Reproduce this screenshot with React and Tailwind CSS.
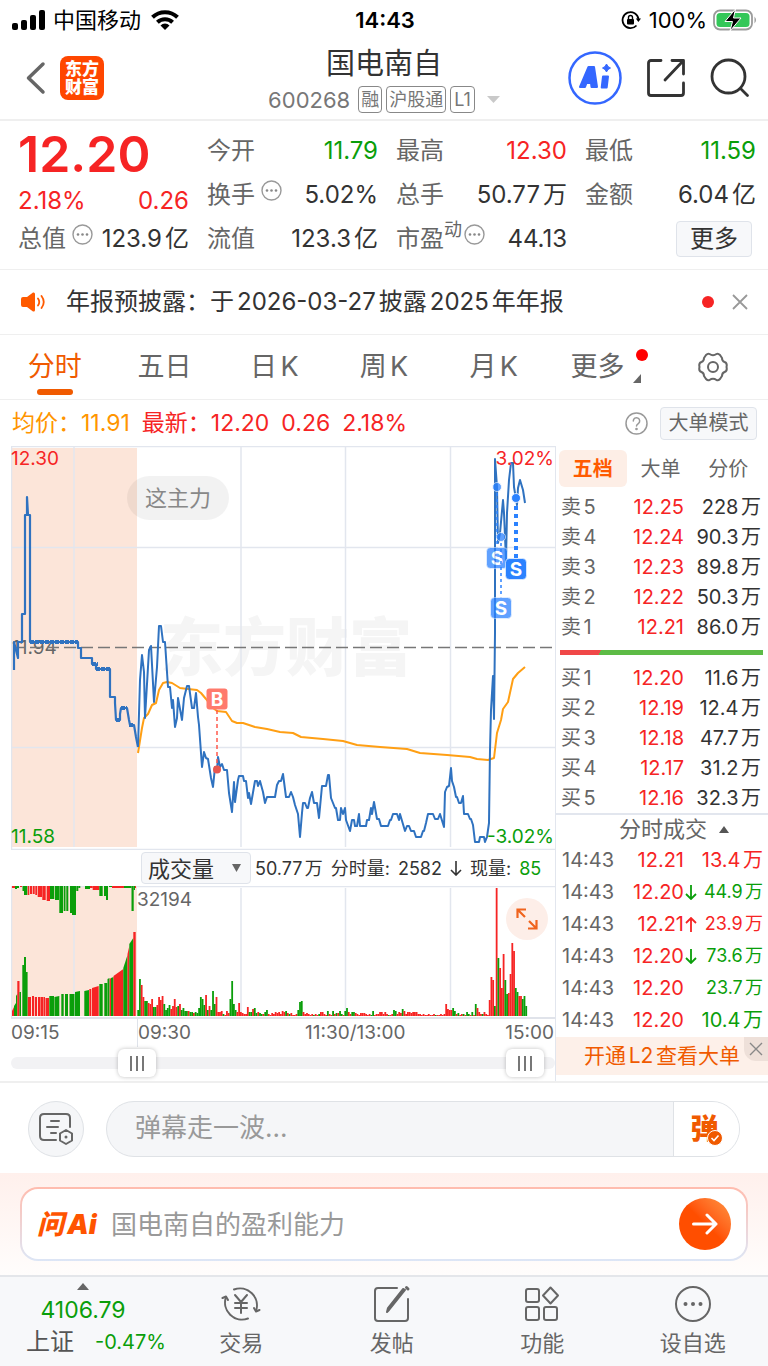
import React, { useState } from 'react';

const RED = '#f62424';
const GREEN = '#0a9e0a';

const pricePre =
  '14,670 14,642 18,658 18,642 22,642 22,614 25,614 25,515 27,515 27,497 28,515 30,515 30,642 78,642 78,648 81,648 81,658 92,658 92,664 96,664 96,669 110,669 110,697 115,697 115,703 116,720 120,720 120,714 121,708 127,708 128,714 129,720 130,725 134,725 136,737 138,747';

const priceLine =
  '138,747 140,680 142,655 144,672 145,718 149,650 151,646 154,702 157,667 159,626 161,626 163,642 165,642 168,687 170,687 172,708 173,700 175,727 177,718 178,698 182,720 184,698 187,686 189,686 192,708 194,708 196,693 198,717 199,725 202,767 204,752 206,758 208,759 211,778 213,787 215,767 217,770 218,757 220,767 222,764 224,770 227,770 229,793 232,812 234,782 235,802 238,780 239,776 243,776 244,781 246,781 248,798 249,793 251,804 255,781 257,781 258,786 260,781 263,792 265,803 267,797 275,797 277,785 279,781 281,781 283,774 286,797 289,797 291,792 293,797 295,805 298,814 300,837 302,813 303,803 305,803 307,808 308,808 310,798 312,792 314,803 317,803 319,818 322,786 326,786 328,775 329,775 331,798 335,808 336,808 338,820 340,820 341,808 343,814 345,808 346,820 350,831 352,820 354,820 355,826 357,826 359,814 360,826 366,826 367,820 369,820 371,808 372,814 374,802 377,819 379,819 381,826 388,826 390,820 391,820 393,814 397,814 399,820 400,814 405,831 407,826 409,826 411,831 414,831 416,837 421,837 423,831 424,831 426,823 428,814 433,814 435,819 438,819 440,814 444,827 445,792 447,787 449,786 451,768 452,781 454,787 456,797 457,797 459,803 461,803 463,796 464,814 468,814 470,819 471,819 473,825 475,842 479,842 480,837 484,837 485,842 487,837 489,823 490,750 491,710 493,676 494,719 495,633 495,459 497,487 498,543 500,533 503,500 504,513 506,560 507,513 509,480 511,463 513,463 514,487 517,505 518,488 520,480 523,490 525,503';

const averageLine =
  '138,753 142,728 144,718 148,714 152,705 156,703 159,690 163,683 167,682 172,683 180,688 188,689 197,690 201,693 206,699 213,708 217,711 226,712 232,721 237,723 243,723 255,727 267,729 280,732 293,733 301,737 323,739 343,741 357,745 380,747 407,749 420,753 447,755 470,757 477,759 488,760 494,758 497,733 501,720 503,709 508,702 513,679 518,673 525,667';

// call auction, unmatched volume: [from, to, length, colour]
const auctionTop = [
  [12, 15, 2, RED], [15, 17, 3, GREEN], [17, 19, 2, GREEN], [20, 22, 1, RED], [22.5, 24, 5, GREEN], [24, 27.3, 9, GREEN],
  [27.7, 29.3, 9, RED], [30, 32, 8, RED], [32.7, 34.7, 8, RED], [35.3, 37, 9, RED], [37.7, 42, 11, RED],
  [42.3, 45.7, 14, RED], [46.7, 50, 15, RED], [50, 54.3, 13, GREEN], [55, 59, 14, GREEN], [59.3, 63, 27, GREEN],
  [63.7, 65.5, 25, GREEN], [66.3, 68.3, 25, GREEN], [70, 72, 27, GREEN], [72, 76, 29, GREEN], [76.3, 78.3, 5, GREEN],
  [78.3, 80.3, 2, GREEN], [85, 90, 3, GREEN], [90, 92.7, 2, RED], [92.7, 99.3, 4, RED], [99.3, 102.7, 10, GREEN],
  [104, 106, 10, GREEN], [106, 108, 14, GREEN], [109, 112, 1, GREEN], [112, 124, 2, RED], [124, 131.5, 2, GREEN],
  [131.5, 133.7, 25, GREEN], [133.7, 135, 4, GREEN], [135, 136, 2, RED],
];

// call auction, matched volume: [from, to, start height, end height, colour]
const auctionBottom = [
  [12, 14, 5, 9, RED], [14, 16, 10, 13, GREEN], [16, 17.3, 20, 22, GREEN], [17.3, 19.5, 35, 35, RED],
  [19.5, 21, 24, 24, GREEN], [22.3, 24, 51, 51, GREEN], [24, 26, 59, 59, GREEN], [26, 27.6, 44, 44, GREEN],
  [27.8, 31, 19, 19, RED], [32, 34, 20, 20, RED], [34.8, 37, 19, 19, RED], [38, 40, 19, 19, RED],
  [40.4, 43, 19, 19, RED], [43.4, 45, 19, 19, RED], [45.5, 49, 18, 18, RED], [49.3, 54, 20, 20, GREEN],
  [54.4, 59.3, 19, 20, GREEN], [61.3, 63.7, 22, 22, GREEN], [65, 68, 22, 22, GREEN], [69.5, 74.5, 22, 22, GREEN],
  [75, 80, 24, 25, GREEN], [84.3, 89, 25, 26, GREEN], [89.3, 91.3, 27, 27, RED], [92, 98.7, 28, 30, RED],
  [99.3, 102.7, 32, 32, GREEN], [104.3, 107.3, 33, 33, GREEN], [107.5, 109.5, 37, 38, GREEN], [109.7, 111, 37, 38, RED],
  [111, 113.5, 38, 39, GREEN], [113.5, 123.3, 40, 47, RED], [123.3, 127.5, 48, 61, GREEN], [127.5, 129.3, 62, 70, RED],
  [129.3, 133.3, 72, 78, GREEN], [133.3, 135.7, 84, 84, RED],
];

// [first minute, one bar a minute], below zero for a falling minute
const minuteVolumes = [
  [0, [-6, -37, 31, 19, -15, -15, 13, 12, 17, -9, -9, 11, 19, 16, 20, -12, -6, -8, -11, 7, 10, 17, 9, -10, 12, -6, -8, -5, -5, 5]],
  [30, [-4, -4, 3, -4, -3, -8, -19, -17, -11, 21, -6, 10, -6, -25, -12, 19, 4, 4, 5, -2, 1, 5, 3]],
  [53, [-17, -35, -12, -6, 4, 13, 4, 3, 2, 2, 9, -4, -4, 7, -8, -3, 4, -3, -2, 2, -4, -6, 2, 1, 3, 2, 4, 3, 4, 2]],
  [83, [5, 4, -5, 3, -2, 3, 1, 1, 2, -6, -14, -15, 4, 2, 3, 2, 1, 2, -1, 2, 1, -2, 4, 4, 2, 1, -5, 2, 1, -5]],
  [113, [2, -3, 3, -5, -2, 1, -5, -8, 4, 2, -4, -4, 3, 2, 1, 3, 3, 3, 2, 1, 2, -1, -5, 1, 2, 2, 4, 4, 2, 4]],
  [143, [2, -1, 1, 2, -6, -5, 2, 4, 3, -7, 5, 2, 4, 4, 3, 4, 4, 4, 2, 2, 1, 2, 1, 1, 2, 1, 1, 2, -1, 1, 1, 2, 1, 2]],
  [177, [12, 7, 6, 6, -8, -5, 2, -3, 1, 2, -2, 1, -4, -2, 1, -4, 1, -12, 8, 4, 2, -2, 4, 2, 1]],
  [202, [16, 39, 36, -10, 128, -58, 48, 28, 62, -36, -22, 23, 42, 73, 65, -28, -24, 20, 20, -17, -20, -10]],
];

const marks = [
  { x: 497, y: 487, labelY: 558, dash: '3 3', width: 2, opacity: 0.75 },
  { x: 516, y: 498, labelY: 569, dash: '4 4', width: 4, opacity: 1 },
  { x: 501, y: 537, labelY: 608, dash: '3 3', width: 2, opacity: 0.75 },
];

const sells = [
  ['5', '12.25', '228'],
  ['4', '12.24', '90.3'],
  ['3', '12.23', '89.8'],
  ['2', '12.22', '50.3'],
  ['1', '12.21', '86.0'],
];

const buys = [
  ['1', '12.20', '11.6'],
  ['2', '12.19', '12.4'],
  ['3', '12.18', '47.7'],
  ['4', '12.17', '31.2'],
  ['5', '12.16', '32.3'],
];

const trades = [
  ['14:43', '12.21', '', '13.4', 'text-[20px] text-[#f62424]'],
  ['14:43', '12.20', 'down', '44.9', 'text-[18px] text-[#0a9e0a]'],
  ['14:43', '12.21', 'up', '23.9', 'text-[18px] text-[#f62424]'],
  ['14:43', '12.20', 'down', '73.6', 'text-[18px] text-[#0a9e0a]'],
  ['14:43', '12.20', '', '23.7', 'text-[18px] text-[#0a9e0a]'],
  ['14:43', '12.20', '', '10.4', 'text-[20px] text-[#0a9e0a]'],
];

function StatusBar() {
  return (
    <div className="grid h-10 grid-cols-[1fr_auto_1fr] items-center pl-3 pr-2.5 text-[22px] leading-none text-black">
      <div className="flex items-center">
        <svg width="33" height="20" viewBox="0 0 33 20" aria-hidden="true">
          <rect x="0" y="13" width="6" height="7" rx="2" />
          <rect x="9" y="10" width="6" height="10" rx="2" />
          <rect x="18" y="5" width="6" height="15" rx="2" />
          <rect x="27" y="0" width="6" height="20" rx="2" />
        </svg>
        <span className="ml-2">中国移动</span>
        <svg className="ml-2.5" width="28" height="20" viewBox="0 0 28 20" aria-hidden="true">
          <g fill="none" stroke="#000" strokeWidth="4">
            <path d="M1.500 7.200A18 18 0 0 1 26.500 7.200" />
            <path d="M6.400 12.200A11 11 0 0 1 21.600 12.200" />
          </g>
          <path d="M14 20l-4.500-4.600a6.500 6.500 0 0 1 9 0z" />
        </svg>
      </div>
      <span className="font-semibold">14:43</span>
      <div className="flex items-center justify-end">
        <svg width="20" height="20" viewBox="0 0 20 20" fill="none" stroke="#000" strokeWidth="1.8" aria-hidden="true">
          <path d="M15.500 15.500A8 8 0 1 1 17.500 9" />
          <path d="M14.800 8.500h5.200l-2.600 3.600z" fill="#000" stroke="none" />
          <rect x="6" y="9" width="7" height="5.500" rx="1" fill="#000" stroke="none" />
          <path d="M7.500 9.500V7.500a2 2 0 0 1 4 0v2" strokeWidth="1.400" />
        </svg>
        <span className="ml-2">100%</span>
        <svg className="ml-1.5" width="45" height="22" viewBox="0 0 45 22" aria-hidden="true">
          <rect x="1" y="1.500" width="38" height="19" rx="6" fill="none" stroke="#9b9b9b" strokeWidth="1.800" />
          <rect x="3.500" y="4" width="33" height="14" rx="3.500" fill="#34c759" />
          <path d="M41.500 7.500q3 3.500 0 7z" fill="#9b9b9b" />
          <path d="M22.500 0L12 12.500h7.500L17 22l11-13h-7.500z" fill="#000" stroke="#fff" strokeWidth="1" />
        </svg>
      </div>
    </div>
  );
}

function Header() {
  return (
    <header className="grid h-[81px] grid-cols-[1fr_auto_1fr] items-center border-b-2 border-[#efefef] px-[18px] pb-1">
      <div className="flex items-center gap-3 pl-1.5">
        <button aria-label="返回" className="w-6">
          <svg width="24" height="34" viewBox="0 0 24 34" fill="none" stroke="#666" strokeWidth="3.500" strokeLinecap="round" strokeLinejoin="round">
            <path d="M19 3L4.500 17L19 31" />
          </svg>
        </button>
        <a href="#home" className="flex size-11 flex-col items-center justify-center rounded-lg bg-[#ff4600] text-[17px] font-black leading-[18px] text-white">
          <span>东方</span>
          <span>财富</span>
        </a>
      </div>

      <div className="flex flex-col items-center gap-1 pt-1">
        <h1 className="text-[29px] leading-9 text-[#333]">国电南自</h1>
        <div className="flex items-center gap-1 text-[#777]">
          <span className="mr-1 text-[22px] leading-7">600268</span>
          <span className="rounded border border-[#888] px-0.5 text-[18px] leading-[25px]">融</span>
          <span className="rounded border border-[#888] px-0.5 text-[18px] leading-[25px]">沪股通</span>
          <span className="rounded border border-[#888] px-[3px] text-[18px] leading-[25px]">L1</span>
          <svg className="ml-2" width="13" height="7" viewBox="0 0 13 7" fill="#c9c9c9" aria-hidden="true">
            <path d="M0 0h13L6.500 7z" />
          </svg>
        </div>
      </div>

      <div className="flex items-center justify-end">
        <button aria-label="AI">
          <svg width="54" height="54" viewBox="0 0 54 54">
            <circle cx="27" cy="27" r="25.500" fill="#fff" stroke="#3467ff" strokeWidth="2.500" />
            <g fill="#3467ff" stroke="#3467ff" strokeLinejoin="round">
              <path d="M12 36L20.500 16H26L29 36H23.500L23 32H18.500L17 36zM20 27.500h2.500l-.4-4.500z" strokeWidth="2" fillRule="evenodd" />
              <path d="M35 25.500h5l-1.300 11h-5z" strokeWidth="2" />
              <path d="M38.500 13q1 3 4 4q-3 1-4 4q-1-3-4-4q3-1 4-4z" strokeWidth="1" />
            </g>
          </svg>
        </button>
        <button aria-label="分享" className="ml-6">
          <svg width="40" height="40" viewBox="0 0 40 40" fill="none" stroke="#333" strokeWidth="2.800" strokeLinecap="round" strokeLinejoin="round">
            <path d="M15 2.500H5Q2.500 2.500 2.500 5V35Q2.500 37.500 5 37.500H35Q37.500 37.500 37.500 35V25" />
            <path d="M26 2.500H37.500V16M37 3L19 22" />
          </svg>
        </button>
        <button aria-label="搜索" className="ml-6">
          <svg width="40" height="40" viewBox="0 0 40 40" fill="none" stroke="#333" strokeWidth="2.800" strokeLinecap="round">
            <circle cx="18.500" cy="18.500" r="16.500" />
            <path d="M31 31L37.500 37.500" />
          </svg>
        </button>
      </div>
    </header>
  );
}

function MoreInfo() {
  return (
    <svg className="mb-2.5 ml-1.5" width="21" height="21" viewBox="0 0 21 21" aria-hidden="true">
      <circle cx="10.500" cy="10.500" r="9.500" fill="none" stroke="#999" strokeWidth="1.400" />
      <g fill="#888">
        <circle cx="6" cy="10.500" r="1.300" />
        <circle cx="10.500" cy="10.500" r="1.300" />
        <circle cx="15" cy="10.500" r="1.300" />
      </g>
    </svg>
  );
}

function Stat({ label, info, sup, children, color = 'text-[#333]' }) {
  return (
    <div className="flex h-11 items-center">
      <dt className="flex items-center text-[#666]">
        {label}
        {sup && <sup className="text-[18px]">{sup}</sup>}
        {info && (sup ? <span className="-ml-1"><MoreInfo /></span> : <MoreInfo />)}
      </dt>
      <dd className={`ml-auto ${color}`}>{children}</dd>
    </div>
  );
}

function Quote() {
  return (
    <dl className="grid grid-cols-4 gap-x-[18px] border-b border-[#efefef] pb-2 pl-[18px] pr-3 pt-2 text-[24px] leading-8">
      <div>
        <div className="h-[50px] text-[50px] font-semibold leading-[50px] text-[#f62424]">12.20</div>
        <div className="flex h-11 items-center justify-between text-[#f62424]">
          <span>2.18%</span>
          <span>0.26</span>
        </div>
        <div className="-mt-1.5">
          <Stat label="总值" info>123.9亿</Stat>
        </div>
      </div>
      <div>
        <Stat label="今开" color="text-[#0a9e0a]">11.79</Stat>
        <Stat label="换手" info>5.02%</Stat>
        <Stat label="流值">123.3亿</Stat>
      </div>
      <div>
        <Stat label="最高" color="text-[#f62424]">12.30</Stat>
        <Stat label="总手">50.77万</Stat>
        <Stat label="市盈" sup="动" info>44.13</Stat>
      </div>
      <div>
        <Stat label="最低" color="text-[#0a9e0a]">11.59</Stat>
        <Stat label="金额">6.04亿</Stat>
        <div className="flex h-11 items-center justify-end pr-1">
          <button className="h-9 w-[76px] rounded border border-[#dfe3ea] bg-[#f7f8fa] text-[#333]">更多</button>
        </div>
      </div>
    </dl>
  );
}

function Notice() {
  return (
    <div className="flex h-[65px] items-center border-b border-[#efefef] pl-[21px] pr-5">
      <svg width="25" height="20" viewBox="0 0 25 20" aria-hidden="true">
        <path d="M0 7Q0 5 2 5H6L12 .500Q14 0 14 2V18Q14 20 12 19.500L6 15H2Q0 15 0 13z" fill="#ff5a00" />
        <path d="M17 6.500Q19.500 10 17 13.500M20.500 4Q25 10 20.500 16" fill="none" stroke="#ff5a00" strokeWidth="1.800" strokeLinecap="round" />
      </svg>
      <p className="ml-5 text-[24px] text-[#333]">年报预披露：于2026-03-27披露2025年年报</p>
      <span className="ml-auto size-3 rounded-full bg-[#f62424]" />
      <button aria-label="关闭" className="ml-[18px]">
        <svg width="16" height="16" viewBox="0 0 16 16" stroke="#999" strokeWidth="1.800">
          <path d="M1 1L15 15M15 1L1 15" />
        </svg>
      </button>
    </div>
  );
}

function PeriodTabs() {
  const [active, setActive] = useState('分时');
  return (
    <nav className="grid h-[65px] grid-cols-7 border-b border-[#efefef] text-[27px] text-[#666]">
      {['分时', '五日', '日K', '周K', '月K'].map((name) => (
        <button
          key={name}
          onClick={() => setActive(name)}
          className={`relative ${name === active ? 'text-[#f05a00]' : ''}`}
        >
          {name}
          {name === active && <span className="absolute bottom-1 left-1/2 h-1.5 w-9 -translate-x-1/2 rounded-full bg-[#f05a00]" />}
        </button>
      ))}
      <button className="relative pr-3">
        更多
        <span className="absolute right-2.5 top-3.5 size-3 rounded-full bg-[#ff0000]" />
        <svg className="absolute bottom-4 right-[17px]" width="8" height="9" viewBox="0 0 8 9" fill="#666" aria-hidden="true">
          <path d="M8 0V9H0z" />
        </svg>
      </button>
      <button aria-label="设置" className="flex items-center justify-center">
        <svg width="32" height="30" viewBox="0 0 32 30" fill="none" stroke="#666" strokeWidth="2" strokeLinejoin="round">
          <path d="M9 3Q11 1 12.500 2Q16 4.500 19.500 2Q21 1 23 3L25 6Q25 9 27.500 10Q30.500 11 29.500 15Q30.500 19 27.500 20Q25 21 25 24L23 27Q21 29 19.500 28Q16 25.500 12.500 28Q11 29 9 27L7 24Q7 21 4.500 20Q1.500 19 2.500 15Q1.500 11 4.500 10Q7 9 7 6z" />
          <circle cx="16" cy="15" r="5" />
        </svg>
      </button>
    </nav>
  );
}

function Legend() {
  return (
    <div className="flex h-[46px] items-center gap-3 pl-3 pr-[11px] text-[23px] text-[#f62424]">
      <span className="text-[#ff9500]">均价：11.91</span>
      <span>最新：12.20</span>
      <span>0.26</span>
      <span>2.18%</span>
      <button aria-label="说明" className="ml-auto">
        <svg width="23" height="23" viewBox="0 0 23 23" fill="none" stroke="#999" strokeWidth="1.500" strokeLinecap="round">
          <circle cx="11.500" cy="11.500" r="10.500" />
          <path d="M8.300 9a3.200 3.200 0 1 1 5 2.600q-1.800 1.200-1.800 2.400" />
          <circle cx="11.500" cy="17" r=".600" fill="#999" />
        </svg>
      </button>
      <button className="h-[33px] w-[97px] whitespace-nowrap rounded border border-[#dfe3ea] bg-[#f7f8fa] text-[20px] leading-none text-[#666]">
        大单模式
      </button>
    </div>
  );
}

function PriceChart() {
  return (
    <div className="relative">
      <svg className="block h-auto w-full" viewBox="11 446 544 404" role="img" aria-label="分时走势">
        <rect x="11" y="448" width="126" height="399" fill="#fce5d9" />
        <text x="160" y="670" fontSize="63" fontWeight="900" fill="#f5f5f5">东方财富</text>
        <g stroke="#e2e6ee" strokeWidth="1.500">
          <path d="M11 446.500H555M11 547.500H555M11 747.500H555M11 849.500H555" />
          <path d="M11.500 446V850M74 447V847M241 447V847M345.500 447V847M450.500 447V847" />
        </g>
        <text x="12" y="654" fontSize="19" fill="#666">11.94</text>
        <path d="M13 647.500H555" stroke="#777" strokeWidth="1.500" strokeDasharray="12 5" />
        <g fill="none" strokeWidth="2" strokeLinejoin="round">
          <polyline points={averageLine} stroke="#ff9f14" />
          <polyline points={pricePre} stroke="#2f72c0" strokeWidth="2.200" />
          <path d="M30 642H78M92 664H98M96 669H110M116 720H121M121 708H127M129 725H134" stroke="#2f72c0" strokeWidth="4" strokeDasharray="4 1" />
          <polyline points={priceLine} stroke="#2f72c0" />
        </g>
        <g fontSize="19">
          <text x="11" y="465" fill={RED}>12.30</text>
          <text x="11" y="843" fill={GREEN}>11.58</text>
          <text x="554" y="465" fill={RED} textAnchor="end">3.02%</text>
          <text x="554" y="843" fill={GREEN} textAnchor="end">-3.02%</text>
        </g>

        <path d="M217 710V764" stroke="#ff5a4c" strokeWidth="1.500" strokeDasharray="4 3" />
        <circle cx="217" cy="769.500" r="4" fill="#e8574f" />
        <rect x="206.500" y="688.500" width="21" height="21" rx="3" fill="#ff7a6c" />
        <text x="217" y="706" fontSize="19" fontWeight="700" fill="#fff" textAnchor="middle">B</text>
        {marks.map((m) => (
          <g key={m.x} opacity={m.opacity}>
            <path d={`M${m.x} ${m.y}V${m.labelY - 10}`} stroke="#2b82ff" strokeWidth={m.width} strokeDasharray={m.dash} />
            <circle cx={m.x} cy={m.y} r="4.500" fill="#2b82ff" stroke="#fff" strokeWidth=".800" />
            <rect x={m.x - 10.5} y={m.labelY - 10.5} width="21" height="21" rx="4" fill="#2b82ff" stroke="#fff" strokeWidth=".600" />
            <text x={m.x} y={m.labelY + 7} fontSize="19" fontWeight="700" fill="#fff" textAnchor="middle">S</text>
          </g>
        ))}
      </svg>
      <span className="absolute left-[116px] top-[30px] rounded-full bg-black/5 px-[18px] text-[22px] leading-[44px] text-[#888]">这主力</span>
    </div>
  );
}

function VolumeBar() {
  return (
    <div className="ml-[130px] flex h-9 items-center gap-2 whitespace-nowrap text-[18px] text-[#333]">
      <div className="relative -mr-1">
        <select aria-label="指标" className="block h-8 w-[110px] appearance-none rounded border border-[#dfe3ea] bg-[#f7f8fa] pl-1.5 text-[22px]">
          <option>成交量</option>
        </select>
        <svg className="pointer-events-none absolute right-2.5 top-3" width="9" height="8" viewBox="0 0 9 8" fill="#666" aria-hidden="true">
          <path d="M0 0H9L4.500 8z" />
        </svg>
      </div>
      <span>50.77万</span>
      <span>分时量:</span>
      <span>2582</span>
      <svg width="12" height="15" viewBox="0 0 12 15" fill="none" stroke="#333" strokeWidth="1.600" aria-hidden="true">
        <path d="M6 0V14M1 9L6 14L11 9" />
      </svg>
      <span>现量:</span>
      <span className="text-[#0a9e0a]">85</span>
    </div>
  );
}

function VolumeChart() {
  const base = 1016;
  return (
    <div className="relative">
      <svg className="block h-auto w-full" viewBox="11 886 544 133" role="img" aria-label="成交量">
        <rect x="11" y="886" width="126" height="130" fill="#fce5d9" />
        <path d="M11 886.500H555M11.500 886V1018M74 888V1016M241 888V1016M345.500 888V1016M450.500 888V1016" stroke="#e2e6ee" strokeWidth="1.500" />
        <path d="M11 1018H555" stroke="#e0e3ea" strokeWidth="2" />
        {auctionTop.map(([from, to, length, color]) => (
          <rect key={from} x={from} y="886" width={to - from} height={length} fill={color} />
        ))}
        {auctionBottom.map(([from, to, start, end, color]) => (
          <path key={from} d={`M${from} ${base}V${base - start}L${to} ${base - end}V${base}z`} fill={color} />
        ))}
        {minuteVolumes.map(([first, values]) =>
          values.map((v, i) => (
            <rect
              key={first + i}
              x={137.3 + (first + i) * 1.74}
              y={base - Math.abs(v)}
              width="1.800"
              height={Math.abs(v)}
              fill={v > 0 ? RED : GREEN}
            />
          ))
        )}
        <text x="137" y="906" fontSize="19" fill="#666">32194</text>
      </svg>
      <button aria-label="全屏" className="absolute right-[7px] top-3 flex size-[42px] items-center justify-center rounded-full bg-[#fdeee8]">
        <svg width="22" height="22" viewBox="0 0 22 22" fill="none" stroke="#f0641e" strokeWidth="2.200">
          <path d="M1.500 10V1.500H10M2 2L9 9M20.500 12V20.500H12M20 20L13 13" />
        </svg>
      </button>
    </div>
  );
}

const rangeClass =
  'pointer-events-none absolute inset-0 h-full w-full appearance-none bg-transparent [&::-webkit-slider-thumb]:pointer-events-auto [&::-webkit-slider-thumb]:h-7 [&::-webkit-slider-thumb]:w-[38px] [&::-webkit-slider-thumb]:appearance-none [&::-webkit-slider-thumb]:rounded-md [&::-webkit-slider-thumb]:bg-white [&::-webkit-slider-thumb]:bg-[linear-gradient(90deg,#777_2px,transparent_2px,transparent_6px,#777_6px,#777_8px,transparent_8px,transparent_12px,#777_12px)] [&::-webkit-slider-thumb]:bg-[length:14px_15px] [&::-webkit-slider-thumb]:bg-center [&::-webkit-slider-thumb]:bg-no-repeat [&::-webkit-slider-thumb]:shadow-[0_0_4px_rgba(0,0,0,0.25)]';

function TimeRange() {
  return (
    <>
      <div className="grid grid-cols-[126fr_168fr_250fr] text-[19px] leading-7 text-[#666]">
        <span>09:15</span>
        <span className="border-l border-[#dfe3ea]">09:30</span>
        <span className="flex justify-between pr-px">
          <span>11:30/13:00</span>
          <span>15:00</span>
        </span>
      </div>
      <div className="relative mb-0.5 h-8">
        <div className="absolute inset-x-0 top-2.5 h-3 rounded-full bg-[#f2f2f4]" />
        <input type="range" aria-label="开始时间" min="0" max="1000" defaultValue="212" className={rangeClass} />
        <input type="range" aria-label="结束时间" min="0" max="1000" defaultValue="978" className={rangeClass} />
      </div>
    </>
  );
}

function Levels({ side, rows }) {
  return (
    <table className="w-full text-[20px] leading-[30px]">
      <tbody>
        {rows.map(([level, price, volume]) => (
          <tr key={level} className="h-[30px]">
            <th scope="row" className="w-[50px] pl-[5px] text-left font-normal text-[#666]">{side + level}</th>
            <td className="text-right text-[#f62424]">{price}</td>
            <td className="w-[84px] pr-[7px] text-right text-[#333]">{volume}万</td>
          </tr>
        ))}
      </tbody>
    </table>
  );
}

function TradeArrow({ dir }) {
  return (
    <svg className="mx-auto" width="12" height="15" viewBox="0 0 12 15" fill="none" stroke={dir === 'up' ? RED : GREEN} strokeWidth="1.800">
      <path d={dir === 'up' ? 'M6 15V1M1 6L6 1L11 6' : 'M6 0V14M1 9L6 14L11 9'} />
    </svg>
  );
}

function OrderBook() {
  return (
    <aside className="flex w-[213px] shrink-0 flex-col border-l border-[#e2e6ee] pt-1">
      <div className="mb-[5px] grid h-[37px] grid-cols-3 pl-[3px] pr-1.5 text-[20px] text-[#666]">
        <button className="rounded-md bg-[#fdeee6] font-bold text-[#ff5a00]">五档</button>
        <button>大单</button>
        <button>分价</button>
      </div>
      <Levels side="卖" rows={sells} />
      <div className="my-2 ml-1 mr-[5px] h-[5px] bg-[linear-gradient(120deg,#f04848_20%,#5dbb46_20%)]" />
      <Levels side="买" rows={buys} />

      <button className="flex h-[31px] items-center justify-center gap-3 border-t-2 border-[#e2e6ee] pl-6 text-[22px] text-[#666]">
        分时成交
        <svg width="10" height="7" viewBox="0 0 10 7" fill="#555" aria-hidden="true">
          <path d="M0 7H10L5 0z" />
        </svg>
      </button>
      <table className="w-full table-fixed text-[20px] leading-8">
        <tbody>
          {trades.map(([time, price, dir, volume, style], i) => (
            <tr key={i} className="h-8">
              <td className="w-[62px] pl-1.5 text-[#666]">{time}</td>
              <td className="text-right text-[#f62424]">{price}</td>
              <td className="w-3.5">{dir && <TradeArrow dir={dir} />}</td>
              <td className={`w-[70px] whitespace-nowrap pr-[5px] text-right ${style}`}>{volume}万</td>
            </tr>
          ))}
        </tbody>
      </table>
      <div className="relative mt-px bg-[#fdf0e9]">
        <a href="#l2" className="block text-center text-[21px] leading-[38px] text-[#f05a00]">开通L2查看大单</a>
        <button aria-label="关闭" className="absolute right-0 top-0 flex h-6 w-6 items-center justify-center rounded-bl-xl bg-[#eee0d9]">
          <svg width="14" height="14" viewBox="0 0 14 14" stroke="#888" strokeWidth="1.400">
            <path d="M1 1L13 13M13 1L1 13" />
          </svg>
        </button>
      </div>
    </aside>
  );
}

function CommentBar() {
  return (
    <div className="flex items-center gap-[22px] border-t-2 border-[#efefef] px-7 pb-4 pt-[18px]">
      <button aria-label="弹幕设置" className="flex size-14 shrink-0 items-center justify-center rounded-full border border-[#dfe2e6] bg-[#f5f6f8]">
        <svg width="36" height="34" viewBox="0 0 36 34" fill="none" stroke="#666" strokeWidth="2" strokeLinecap="round" strokeLinejoin="round">
          <path d="M18 28H6Q2 28 2 24V6Q2 2 6 2H28Q32 2 32 6V15" />
          <path d="M13 9H21M9 15H20M13 21H18" />
          <path d="M28 18L34 21.500V28.500L28 32L22 28.500V21.500z" />
          <circle cx="28" cy="25" r="1.500" fill="#666" stroke="none" />
        </svg>
      </button>
      <div className="flex h-14 flex-1 overflow-hidden rounded-full border border-[#dfe2e6] bg-[#f5f6f8]">
        <input aria-label="弹幕" placeholder="弹幕走一波..." className="min-w-0 flex-1 bg-transparent pb-1 pl-7 text-[26px] outline-none placeholder:text-[#999]" />
        <button className="relative w-[66px] border-l border-[#dfe2e6] bg-white pr-1 text-[28px] font-black leading-none text-[#f05a00]">
          弹
          <svg className="absolute bottom-2.5 right-4" width="16" height="16" viewBox="0 0 16 16" aria-hidden="true">
            <circle cx="8" cy="8" r="7.500" fill="#f05a00" stroke="#fff" />
            <path d="M4.500 8L7 10.500L11.500 5.500" fill="none" stroke="#fff" strokeWidth="1.600" />
          </svg>
        </button>
      </div>
    </div>
  );
}

function AskBar() {
  return (
    <div className="bg-gradient-to-b from-[#fff0ec] to-[#fffdfc] px-5 py-3.5">
      <div className="rounded-[18px] bg-gradient-to-b from-[#ffbcae] to-[#dce6f6] p-0.5">
        <div className="flex h-[70px] items-center rounded-2xl bg-white px-[15px]">
          <span className="w-[62px] whitespace-nowrap text-[27px] font-black italic leading-none text-[#ff5400]">问Ai</span>
          <input aria-label="问AI" placeholder="国电南自的盈利能力" className="ml-3 min-w-0 flex-1 text-[26px] outline-none placeholder:text-[#999]" />
          <button aria-label="发送" className="flex size-[52px] items-center justify-center rounded-full bg-gradient-to-tr from-[#ff4e00] from-50% to-[#ff9440]">
            <svg width="26" height="22" viewBox="0 0 26 22" fill="none" stroke="#fff" strokeWidth="3" strokeLinecap="round" strokeLinejoin="round">
              <path d="M1.500 11H24M15 2L24 11L15 20" />
            </svg>
          </button>
        </div>
      </div>
    </div>
  );
}

function NavItem({ label, children }) {
  return (
    <a href="#nav" className="flex flex-col items-center gap-1.5 pt-2">
      <svg width="40" height="38" viewBox="0 0 40 38" fill="none" stroke="#666" strokeWidth="2" strokeLinecap="round" strokeLinejoin="round">
        {children}
      </svg>
      <span>{label}</span>
    </a>
  );
}

function BottomNav() {
  return (
    <nav className="grid h-[91px] grid-cols-[166px_repeat(4,1fr)] border-t-2 border-[#e4e6ea] bg-[#f7f8fa] text-[22px] leading-7 text-[#666]">
      <a href="#index" className="flex flex-col items-center pt-1.5 text-[#0a9e0a]">
        <svg width="12" height="7" viewBox="0 0 12 7" fill="#666" aria-hidden="true">
          <path d="M0 7H12L6 0z" />
        </svg>
        <span className="mt-1.5 text-[23px]">4106.79</span>
        <span className="mt-1 flex w-full items-center justify-between pl-[26px] text-[20px]">
          <span className="text-[24px] text-[#555]">上证</span>
          -0.47%
        </span>
      </a>
      <NavItem label="交易">
        <path d="M13 4.500A17 17 0 0 1 35 26M27 33.500A17 17 0 0 1 5 12" />
        <path d="M1.500 13L5 11.500L7 15M38.500 25L35 26.500L33 23" />
        <path d="M14 10L20 17L26 10M20 17V28M14 18H26M14 23H26" />
      </NavItem>
      <NavItem label="发帖">
        <path d="M25 3H6Q3 3 3 6V33Q3 36 6 36H33Q36 36 36 33V14" />
        <path d="M33 5L17 25L15 27L16 23L31 4z" fill="#666" />
        <path d="M34.500 2.500L36 4" strokeWidth="3" />
      </NavItem>
      <NavItem label="功能">
        <rect x="4" y="4" width="13" height="13" rx="2" />
        <rect x="4" y="22" width="13" height="13" rx="2" />
        <rect x="22" y="22" width="13" height="13" rx="2" />
        <path d="M28.500 2.500L36 10.500L28.500 18.500L21 10.500z" />
      </NavItem>
      <NavItem label="设自选">
        <circle cx="20" cy="19" r="17" />
        <g fill="#666" stroke="none">
          <circle cx="12.500" cy="19" r="2" />
          <circle cx="20" cy="19" r="2" />
          <circle cx="27.500" cy="19" r="2" />
        </g>
      </NavItem>
    </nav>
  );
}

export default function App() {
  return (
    <div className="min-h-screen bg-white font-['Inter','Noto_Sans_CJK_SC',sans-serif] [text-autospace:normal]">
      <StatusBar />
      <Header />
      <Quote />
      <Notice />
      <PeriodTabs />
      <Legend />
      <main className="flex">
        <section className="min-w-0 flex-1 pl-[11px]">
          <PriceChart />
          <VolumeBar />
          <VolumeChart />
          <TimeRange />
        </section>
        <OrderBook />
      </main>
      <CommentBar />
      <AskBar />
      <BottomNav />
    </div>
  );
}
